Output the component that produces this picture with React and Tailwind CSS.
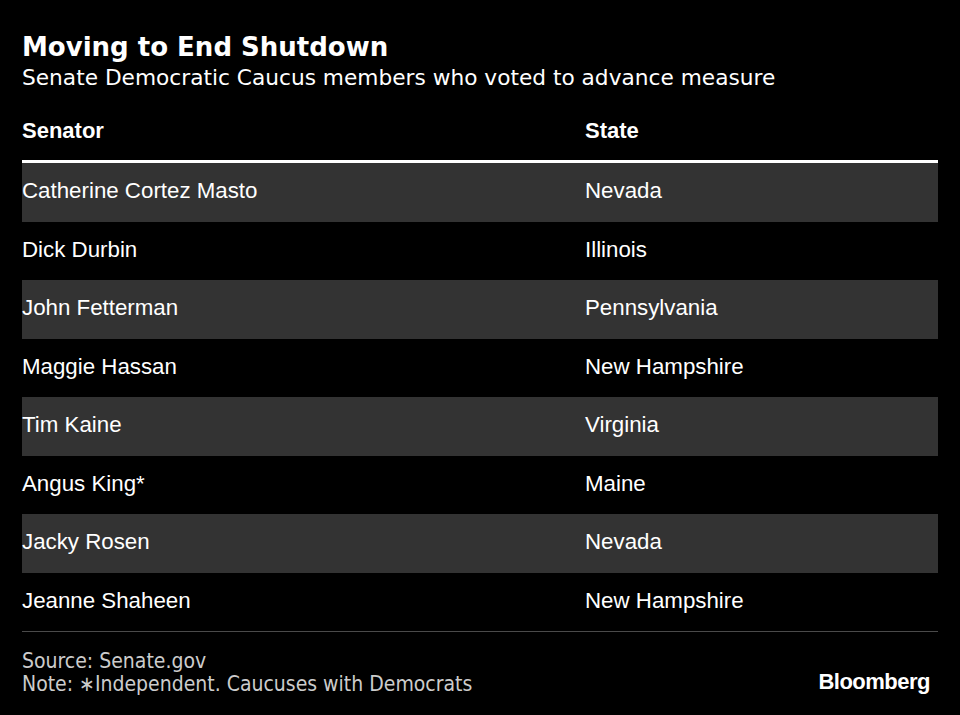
import React from "react";

const rows = [
  ["Catherine Cortez Masto", "Nevada"],
  ["Dick Durbin", "Illinois"],
  ["John Fetterman", "Pennsylvania"],
  ["Maggie Hassan", "New Hampshire"],
  ["Tim Kaine", "Virginia"],
  ["Angus King*", "Maine"],
  ["Jacky Rosen", "Nevada"],
  ["Jeanne Shaheen", "New Hampshire"],
];

export default function App() {
  return (
    <div className="w-[960px] h-[715px] bg-black text-white px-[22px] pt-[30px] overflow-hidden">
      <h1 className="font-['DejaVu_Sans',sans-serif] font-bold text-[26px] leading-[34px]">
        Moving to End Shutdown
      </h1>
      <p className="font-['DejaVu_Sans',sans-serif] text-[21.7px] leading-[28px]">
        Senate Democratic Caucus members who voted to advance measure
      </p>

      <div className="mt-[26px] w-[916px] font-['Liberation_Sans',Arial,sans-serif]">
        <div className="flex h-[45px] items-start border-b-[3px] border-white font-bold text-[22px] leading-[26px]">
          <div className="w-[563px]">Senator</div>
          <div>State</div>
        </div>
        {rows.map(([name, state], i) => (
          <div
            key={name}
            className={
              i % 2 === 0
                ? "flex items-center h-[58.5px] bg-[#333333] text-[22.3px] pb-[3px]"
                : "flex items-center h-[58.5px] text-[22.3px] pb-[3px]"
            }
          >
            <div className="w-[563px]">{name}</div>
            <div>{state}</div>
          </div>
        ))}
        <div className="h-px bg-[#4a4a4a]" />
      </div>

      <div className="mt-[18px] w-[916px] flex items-end justify-between">
        <div className="font-['DejaVu_Sans_Condensed','DejaVu_Sans',sans-serif] [font-stretch:condensed] text-[21px] leading-[23px] text-[#cccccc]">
          <div>Source: Senate.gov</div>
          <div>Note: ∗Independent. Caucuses with Democrats</div>
        </div>
        <div className="font-['Liberation_Sans',Arial,sans-serif] font-bold text-[22px] tracking-[-0.5px] leading-[24px] mr-[8px] mb-[2px]">
          Bloomberg
        </div>
      </div>
    </div>
  );
}
